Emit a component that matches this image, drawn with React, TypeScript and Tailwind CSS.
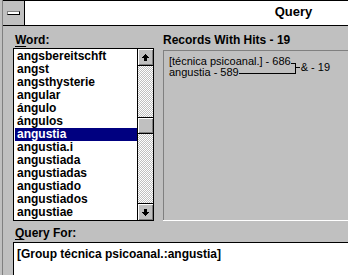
import React from "react";

const words = [
  "angsbereitschft",
  "angst",
  "angsthysterie",
  "angular",
  "ángulo",
  "ángulos",
  "angustia",
  "angustia.i",
  "angustiada",
  "angustiadas",
  "angustiado",
  "angustiados",
  "angustiae",
];

function Arrow({ down = false }: { down?: boolean }) {
  return (
    <svg
      width="7"
      height="7"
      viewBox="0 0 7 7"
      shapeRendering="crispEdges"
      style={down ? { transform: "rotate(180deg)" } : undefined}
    >
      <path d="M3 0h1v1H3z M2 1h3v1H2z M1 2h5v1H1z M0 3h7v1H0z M2 4h3v3H2z" fill="#000" />
    </svg>
  );
}

function ScrollButton({ down = false }: { down?: boolean }) {
  return (
    <div className="h-[16px] bg-[#c0c0c0] flex items-center justify-center shadow-[inset_1px_1px_0_#ffffff,inset_-1px_-1px_0_#808080]">
      <Arrow down={down} />
    </div>
  );
}

export default function App() {
  return (
    <div className="w-[348px] h-[275px] overflow-hidden bg-[#c0c0c0] font-['Liberation_Sans',Arial,sans-serif] text-black">
      <div className="ml-[2px] w-[560px] h-[275px] border-l border-[#808080] flex flex-col">
        {/* Title bar */}
        <div className="h-[26px] border-t border-b border-black bg-white flex shrink-0">
          <div className="w-[22px] h-full bg-[#c0c0c0] border-r border-black flex items-center justify-center">
            <div className="w-[13px] h-[4px] bg-white border border-black border-t-[#808080] border-l-[#808080]" />
          </div>
          <div className="flex-1 flex justify-center pt-[3px]">
            <span className="text-[13px] leading-[15px] font-bold">Query</span>
          </div>
        </div>

        {/* Body */}
        <div className="flex-1 flex flex-col pl-[10px] pt-[7px] min-h-0">
          <div className="flex gap-[9px] items-start">
            {/* Word list */}
            <div className="w-[141px] flex flex-col shrink-0">
              <div className="h-[15px] pl-[2px] text-[12px] leading-[14px] font-bold">
                <span className="underline underline-offset-2">W</span>ord:
              </div>
              <div className="h-[173px] border border-black flex bg-white">
                <div className="flex-1 overflow-hidden pt-[1px]">
                  {words.map((w) => (
                    <div
                      key={w}
                      className={
                        w === "angustia"
                          ? "ml-[1px] h-[13px] pl-[2px] text-[12px] leading-[13px] font-bold whitespace-nowrap bg-[#000080] text-white"
                          : "ml-[1px] h-[13px] pl-[2px] text-[12px] leading-[13px] font-bold whitespace-nowrap"
                      }
                    >
                      {w}
                    </div>
                  ))}
                </div>
                <div className="w-[16px] flex flex-col border-l border-black">
                  <div className="border-b border-black">
                    <ScrollButton />
                  </div>
                  <div className="flex-1 bg-[image:repeating-conic-gradient(#c0c0c0_0%_25%,#ffffff_0%_50%)] bg-[length:2px_2px]">
                    <div className="mt-[51px] h-[17px] border-y border-black">
                      <div className="h-[15px] bg-[#c0c0c0] shadow-[inset_1px_1px_0_#ffffff,inset_-1px_-1px_0_#808080]" />
                    </div>
                  </div>
                  <div className="border-t border-black">
                    <ScrollButton down />
                  </div>
                </div>
              </div>
            </div>

            {/* Records */}
            <div className="flex-1 flex flex-col">
              <div className="h-[17px] text-[12px] leading-[14px] font-bold whitespace-nowrap">
                Records With Hits - 19
              </div>
              <div className="h-[170px] border-t border-l border-[#808080] shadow-[0_1px_0_#ffffff] pt-[5px] pl-[5px]">
                <div className="flex items-center text-[11px] leading-[11px] whitespace-nowrap">
                  <div className="flex flex-col">
                    <div className="flex h-[11px]">
                      <span>[técnica psicoanal.] - 686</span>
                      <span className="w-[5px] h-[4px] mt-[7px] border-t border-r border-black" />
                    </div>
                    <div className="flex h-[11px]">
                      <span>angustia - 589</span>
                      <span className="flex-1 h-[7px] border-b border-r border-black" />
                    </div>
                  </div>
                  <span className="w-[4px] h-px bg-black" />
                  <span className="pl-[1px]">&amp; - 19</span>
                </div>
              </div>
            </div>
          </div>

          {/* Query For */}
          <div className="mt-[5px] h-[14px] pl-[2px] text-[12px] leading-[14px] font-bold">
            <span className="underline underline-offset-2">Q</span>uery For:
          </div>
          <div className="mt-[2px] flex-1 border-t border-l border-black bg-white pt-[4px] pl-[3px] text-[12px] leading-[14px] font-bold whitespace-nowrap">
            [Group técnica psicoanal.:angustia]
          </div>
        </div>
      </div>
    </div>
  );
}
